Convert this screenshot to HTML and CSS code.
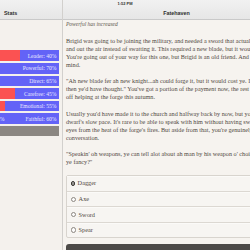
FILE: index.html
```html
<!DOCTYPE html>
<html lang="en">

  <head>
    <meta charset="UTF-8">
    <meta name="viewport" content="width=device-width, initial-scale=1.0">
    <title>Fatehaven</title>
    <link rel="stylesheet" href="styles.css">
  </head>

  <body>
    <div class="app">
      <!-- status bar time sits over both headers -->
      <div class="time">1:52 PM</div>

      <div class="side">
        <div class="bar-head">Stats</div>
        <div class="stats">
          <div class="stat" style="--blue: 40%"><span>Follower: 60%</span><span>Leader: 40%</span></div>
          <div class="stat" style="--blue: 70%"><span>Gentle: 30%</span><span>Powerful: 70%</span></div>
          <div class="stat" style="--blue: 65%"><span>Subtle: 35%</span><span>Direct: 65%</span></div>
          <div class="stat" style="--blue: 45%"><span>Cautious: 55%</span><span>Carefree: 45%</span></div>
          <div class="stat" style="--blue: 55%"><span>Stoic: 45%</span><span>Emotional: 55%</span></div>
          <div class="stat" style="--blue: 60%"><span>Unbelieving: 40%</span><span>Faithful: 60%</span></div>
          <div class="stat-btn"></div>
        </div>
      </div>

      <div class="main">
        <div class="bar-head">Fatehaven</div>
        <div class="story">
          <p class="note">Powerful has increased</p>
          <p>Brigid was going to be joining the military, and needed a sword that actually cut things<br>
            and out the air instead of swatting it. This required a new blade, but it would be costly.<br>
            You're going out of your way for this one, but Brigid is an old friend. And not one you'd<br>
            mind.</p>
          <p>"Ah new blade fer ah new knight...ah could forge it, but it would cost ye. It'd cost more<br>
            then ye'd have thought." You've got a portion of the payment now, the rest you'll work<br>
            off helping at the forge this autumn.</p>
          <p>Usually you'd have made it to the church and halfway back by now, but you're keeping the<br>
            dwarf's slow pace. It's rare to be able to speak with him without having sweat in your<br>
            eyes from the heat of the forge's fires. But aside from that, you're genuinely enjoying the<br>
            conversation.</p>
          <p>"Speakin' oh weapons, ye can tell alot about ah man by his weapon o' choice. What would<br>
            ye fancy?"</p>

          <div class="choices">
            <label class="choice"><span class="radio on"></span>Dagger</label>
            <label class="choice"><span class="radio"></span>Axe</label>
            <label class="choice"><span class="radio"></span>Sword</label>
            <label class="choice"><span class="radio"></span>Spear</label>
          </div>
          <button type="button" class="next">Next</button>
        </div>
      </div>
    </div>
  </body>

</html>
```

FILE: styles.css
```css
body {
  margin: 0;
  width: 250px;
  height: 250px;
  overflow: hidden;
  background: #f6f3ef;
}

.app {
  position: relative;
  display: grid;
  grid-template-columns: 63px 227px;
  height: 250px;
}

.time {
  position: absolute;
  top: 1px;
  left: 0;
  width: 250px;
  text-align: center;
  font: bold 4px/5px "Liberation Sans", sans-serif;
  color: #333;
}

.bar-head {
  height: 20px;
  padding-top: 7px;
  box-sizing: border-box;
  border-bottom: 1px solid #c9c9c9;
  background: linear-gradient(#f1f1f1, #e6e6e6);
  font: bold 5.4px/13px "Liberation Sans", sans-serif;
  color: #2e2e2e;
  text-align: center;
}

.side {
  border-right: 1px solid #d2d0cd;
  background: #f4f1ed;
  overflow: hidden;
}

.side .bar-head {
  text-align: left;
  padding-left: 4px;
}

.stats {
  padding-top: 30.3px;
}

/* red is the opposite stat, blue fills from the right */
.stat {
  display: flex;
  justify-content: space-between;
  align-items: center;
  width: 98px;
  height: 10.7px;
  margin: 0 0 1.95px -39px;
  padding: 0 2.6px;
  box-sizing: border-box;
  background: linear-gradient(to left, #6363f7 var(--blue), #fb5252 var(--blue));
  font: 5.6px "Liberation Serif", serif;
  color: #e8e8ff;
  white-space: nowrap;
}

.stat-btn {
  width: 98px;
  height: 10px;
  margin-left: -39px;
  background: #8b8782;
}

.main {
  overflow: hidden;
}

.story {
  padding: 0.4px 3px 0;
  font: 6.2px/8.1px "Liberation Serif", serif;
  color: #51493f;
  white-space: nowrap;
}

.story p {
  margin: 0 0 8.2px;
}

.story .note {
  font-style: italic;
  font-size: 5.5px;
  color: #5d564e;
}

.choices {
  margin-top: 8px;
  border: 1px solid #d8d4ce;
  border-radius: 2px;
  background: #f7f5f2;
}

.choice {
  display: flex;
  align-items: center;
  gap: 2.2px;
  height: 15.4px;
  padding-left: 4px;
  box-sizing: border-box;
  border-top: 1px solid #dcd8d2;
  box-shadow: inset 0 1px 0 #fbfaf8;
  font-size: 6.3px;
}

.choice:first-child {
  border-top: none;
}

.radio {
  width: 3.4px;
  height: 3.4px;
  border: 0.6px solid #8d8882;
  border-radius: 50%;
  background: #fbfbfb;
}

.radio.on {
  border: 1.1px solid #3d3a37;
  width: 2.4px;
  height: 2.4px;
  background: #4d4a47;
  box-shadow: inset 0 0 0 0.5px #ddd;
}

.next {
  display: block;
  width: 100%;
  height: 16px;
  margin-top: 5.7px;
  border: none;
  border-radius: 3px;
  background: #4c4a48;
  color: #fff;
  font: bold 6px/16px "Liberation Sans", sans-serif;
  padding: 3px 0 0;
  text-align: center;
}
```
